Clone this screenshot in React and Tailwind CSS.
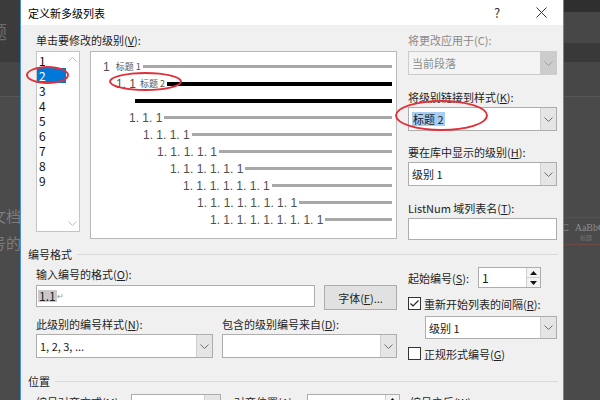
import React from "react";

const previewRows = [
  { pad: "pl-[12px]", num: "1", tag: "标题 1", tagGap: "ml-[6px]", line: "gray" },
  { pad: "pl-[25px]", num: "1. 1", tag: "标题 2", tagGap: "ml-[4px]", line: "black" },
  { pad: "pl-[42px]", num: "", tag: "", line: "black" },
  { pad: "pl-[38px]", num: "1. 1. 1", line: "gray" },
  { pad: "pl-[52px]", num: "1. 1. 1. 1", line: "gray" },
  { pad: "pl-[66px]", num: "1. 1. 1. 1. 1", line: "gray" },
  { pad: "pl-[79px]", num: "1. 1. 1. 1. 1. 1", line: "gray" },
  { pad: "pl-[92px]", num: "1. 1. 1. 1. 1. 1. 1", line: "gray" },
  { pad: "pl-[106px]", num: "1. 1. 1. 1. 1. 1. 1. 1", line: "gray" },
  { pad: "pl-[119px]", num: "1. 1. 1. 1. 1. 1. 1. 1. 1", line: "gray" },
];

function Chevron({ color = "#6d6d6d" }) {
  return (
    <svg width="9" height="5" viewBox="0 0 9 5">
      <path d="M0.5 0.5L4.5 4.5L8.5 0.5" fill="none" stroke={color} strokeWidth="1" />
    </svg>
  );
}

function Combo({ className, children, disabled }) {
  return (
    <div
      className={`flex shrink-0 border ${
        disabled
          ? "border-[#cccccc] bg-[#f4f4f4] text-[#8c8c8c]"
          : "border-[#adadad] bg-white text-[#1a1a1a]"
      } ${className}`}
    >
      <div className="flex flex-1 items-center pl-[3px]">{children}</div>
      <div
        className={`flex w-[16px] items-center justify-center border-l ${
          disabled ? "border-[#cccccc] bg-[#cccccc]" : "border-[#cfcfcf] bg-[#e5e5e5]"
        }`}
      >
        <Chevron color={disabled ? "#a0a0a0" : "#6d6d6d"} />
      </div>
    </div>
  );
}

function Spinner({ className, value }) {
  return (
    <div className={`flex shrink-0 border border-[#adadad] bg-white ${className}`}>
      <div className="flex flex-1 items-center pl-[3px]">{value}</div>
      <div className="flex w-[14px] flex-col border-l border-[#cfcfcf]">
        <div className="flex flex-1 items-center justify-center border-b border-[#cfcfcf] bg-[#f3f3f3]">
          <svg width="7" height="4" viewBox="0 0 7 4">
            <path d="M0 4L3.5 0L7 4Z" fill="#111" />
          </svg>
        </div>
        <div className="flex flex-1 items-center justify-center bg-[#f3f3f3]">
          <svg width="7" height="4" viewBox="0 0 7 4">
            <path d="M0 0L3.5 4L7 0Z" fill="#111" />
          </svg>
        </div>
      </div>
    </div>
  );
}

function Checkbox({ checked }) {
  return (
    <div className="flex h-[13px] w-[13px] shrink-0 items-center justify-center border border-[#333333] bg-white">
      {checked && (
        <svg width="11" height="11" viewBox="0 0 11 11">
          <path d="M1.5 5.5L4 8L9.5 2.5" fill="none" stroke="#222" strokeWidth="1.2" />
        </svg>
      )}
    </div>
  );
}

function GroupHeading({ children, className }) {
  return (
    <div className={`-ml-[8px] flex h-[14px] items-center ${className}`}>
      <span className="whitespace-nowrap">{children}</span>
      <div className="ml-[5px] h-px flex-1 bg-[#dadada]" />
    </div>
  );
}

export default function App() {
  return (
    <div className="relative flex h-[400px] w-[600px] overflow-hidden bg-[#4a4a4a] font-['Noto_Sans_CJK_SC',sans-serif]">
      {/* word window behind, left */}
      <div className="flex w-[20px] shrink-0 flex-col overflow-hidden bg-[#4b4b4b] text-[#7c7c7c]">
        <div className="flex h-[62px] shrink-0 items-center bg-[#3b3b3b]">
          <span className="-ml-[11px] whitespace-nowrap text-[18px] leading-[18px] text-[#6c6c6c]">题</span>
        </div>
        <div className="h-[35px] shrink-0 border-b border-[#565656] bg-[#464646]" />
        <div className="-ml-[9px] mt-[111px] whitespace-nowrap text-[15px] leading-[16px]">文档</div>
        <div className="-ml-[9px] mt-[11px] whitespace-nowrap text-[15px] leading-[16px]">号的</div>
      </div>

      {/* dialog */}
      <div className="h-full w-[544px] shrink-0 overflow-hidden border-x border-[#4a90d9] bg-[#f0f0f0] text-[11px] leading-[14px] text-[#1e1e1e]">
        <div className="flex h-[25px] items-center bg-white">
          <span className="pl-[7px] text-[11px] text-black">定义新多级列表</span>
          <div className="flex-1" />
          <div className="flex w-[44px] justify-center text-[13px] text-[#333]">?</div>
          <div className="flex w-[44px] justify-center">
            <svg width="11" height="11" viewBox="0 0 11 11">
              <path d="M0.5 0.5L10.5 10.5M10.5 0.5L0.5 10.5" stroke="#333" strokeWidth="1" />
            </svg>
          </div>
        </div>

        <div className="flex flex-col pl-[15px] pr-[5px] pt-[8px]">
          {/* top section */}
          <div className="flex">
            <div className="flex w-[361px] flex-col">
              <span className="h-[14px] whitespace-nowrap">
                单击要修改的级别(<u>V</u>):
              </span>
              <div className="mt-[4px] flex items-start">
                <div className="flex h-[181px] w-[44px] shrink-0 border border-[#c4c4c4] bg-white">
                  <div className="flex w-[29px] flex-col pt-[1px] text-[12px] leading-[15px]">
                    {["1", "2", "3", "4", "5", "6", "7", "8", "9"].map((n) => (
                      <div
                        key={n}
                        className={`h-[15px] shrink-0 pl-[2px] ${n === "2" ? "bg-[#0078d7] text-white" : "text-[#111]"}`}
                      >
                        {n}
                      </div>
                    ))}
                  </div>
                  <div className="flex flex-1 flex-col items-center justify-between py-[5px]">
                    <svg width="9" height="5" viewBox="0 0 9 5">
                      <path d="M0.5 4.5L4.5 0.5L8.5 4.5" fill="none" stroke="#bdbdbd" strokeWidth="1" />
                    </svg>
                    <Chevron color="#bdbdbd" />
                  </div>
                </div>
                <div className="ml-[10px] flex h-[188px] w-[307px] shrink-0 flex-col border border-[#b8b8b8] bg-white pr-[4px] pt-[6px] font-['Liberation_Sans',sans-serif] text-[12px] text-[#4f4f4f]">
                  {previewRows.map((r, i) => (
                    <div key={i} className={`flex h-[17px] shrink-0 items-center ${r.pad}`}>
                      {r.num && <span className="whitespace-nowrap">{r.num}</span>}
                      {r.tag && (
                        <span
                          className={`${r.tagGap} whitespace-nowrap font-['Noto_Sans_CJK_SC',sans-serif] text-[9px] text-[#555]`}
                        >
                          {r.tag}
                        </span>
                      )}
                      <div
                        className={`ml-[2px] flex-1 ${
                          r.line === "black" ? "h-[4px] bg-black" : "h-[3px] bg-[#a8a8a8]"
                        }`}
                      />
                    </div>
                  ))}
                </div>
              </div>
            </div>

            <div className="ml-[11px] flex w-[149px] flex-col">
              <span className="h-[14px] whitespace-nowrap text-[#8a8a8a]">将更改应用于(C):</span>
              <Combo disabled className="mt-[4px] h-[24px]">
                当前段落
              </Combo>
              <span className="mt-[15px] h-[14px] whitespace-nowrap">
                将级别链接到样式(<u>K</u>):
              </span>
              <Combo className="mt-[3px] h-[24px]">
                <span className="bg-[#a9cdf0] px-[1px]">标题 2</span>
              </Combo>
              <span className="mt-[14px] h-[14px] whitespace-nowrap">
                要在库中显示的级别(<u>H</u>):
              </span>
              <Combo className="mt-[3px] h-[24px]">级别 1</Combo>
              <span className="mt-[15px] h-[14px] whitespace-nowrap">
                ListNum 域列表名(<u>T</u>):
              </span>
              <div className="mt-[3px] h-[22px] shrink-0 border border-[#adadad] bg-white" />
            </div>
          </div>

          <GroupHeading className="mt-[7px]">编号格式</GroupHeading>

          {/* number format section */}
          <div className="mt-[6px] flex items-start">
            <div className="flex w-[361px] flex-col">
              <span className="h-[14px] whitespace-nowrap">
                输入编号的格式(<u>O</u>):
              </span>
              <div className="mt-[4px] flex items-start">
                <div className="flex h-[22px] w-[279px] items-center border border-[#adadad] bg-white pl-[1px]">
                  <span className="bg-[#c9c9c9] px-[1px] text-[12px] leading-[12px] text-[#222]">1.1</span>
                  <span className="text-[8px] text-[#999]">↵</span>
                </div>
                <div className="ml-[9px] flex h-[25px] w-[73px] items-center justify-center border border-[#adadad] bg-[#e1e1e1]">
                  字体(<u>F</u>)...
                </div>
              </div>
              <div className="mt-[7px] flex h-[14px]">
                <span className="w-[186px] whitespace-nowrap">
                  此级别的编号样式(<u>N</u>):
                </span>
                <span className="whitespace-nowrap">
                  包含的级别编号来自(<u>D</u>):
                </span>
              </div>
              <div className="mt-[3px] flex">
                <Combo className="h-[24px] w-[177px]">1, 2, 3, ...</Combo>
                <Combo className="ml-[9px] h-[24px] w-[175px]"> </Combo>
              </div>
            </div>

            <div className="ml-[11px] flex w-[149px] flex-col">
              <div className="flex h-[21px] items-center">
                <span className="w-[70px] whitespace-nowrap">
                  起始编号(<u>S</u>):
                </span>
                <Spinner className="h-[21px] w-[63px]" value={<span className="text-[12px]">1</span>} />
              </div>
              <div className="mt-[9px] flex h-[13px] items-center">
                <Checkbox checked />
                <span className="ml-[3px] whitespace-nowrap">
                  重新开始列表的间隔(<u>R</u>):
                </span>
              </div>
              <Combo className="ml-[17px] mt-[6px] h-[23px] w-[132px]">级别 1</Combo>
              <div className="mt-[8px] flex h-[13px] items-center">
                <Checkbox />
                <span className="ml-[3px] whitespace-nowrap">
                  正规形式编号(<u>G</u>)
                </span>
              </div>
            </div>
          </div>

          <GroupHeading className="mt-[14px]">位置</GroupHeading>

          {/* position section, cut off */}
          <div className="mt-[6px] flex items-start">
            <span className="mt-[1px] w-[95px] whitespace-nowrap">
              编号对齐方式(<u>M</u>):
            </span>
            <Combo className="h-[24px] w-[90px]"> </Combo>
            <span className="ml-[13px] mt-[1px] w-[73px] whitespace-nowrap">
              对齐位置(<u>A</u>):
            </span>
            <Spinner className="h-[24px] w-[93px]" value={<span className="text-[#888]">0.75 厘米</span>} />
            <span className="ml-[10px] mt-[1px] whitespace-nowrap">
              编号之后(<u>W</u>):
            </span>
          </div>
        </div>
      </div>

      {/* word window behind, right */}
      <div className="flex flex-1 flex-col overflow-hidden bg-[#4a4a4a] text-[#8c8c8c]">
        <div className="h-[12px] shrink-0 bg-[#2f2f2f]" />
        <div className="h-[31px] shrink-0 bg-[#474747]" />
        <div className="h-[19px] shrink-0 bg-[#393939]" />
        <div className="h-[35px] shrink-0 border-b border-[#575757] bg-[#474747]" />
        <div className="mt-[120px] h-px shrink-0 bg-[#6e4a44]" />
        <div className="mt-[3px] flex h-[13px] items-center whitespace-nowrap font-['Liberation_Serif',serif] text-[10px]">
          <span className="-ml-[2px]">C</span>
          <span className="ml-[6px]">AaBbC</span>
        </div>
        <div className="ml-[16px] h-[8px] text-[6px] leading-[8px] text-[#777]">标题</div>
        <div className="mt-[2px] h-px shrink-0 bg-[#6e4a44]" />
      </div>

      {/* red annotation marks */}
      <div className="pointer-events-none absolute left-[26px] top-[66px] h-[18px] w-[43px] rounded-[50%] border-2 border-[#e0303a]" />
      <div className="pointer-events-none absolute left-[109px] top-[72px] h-[19px] w-[73px] rounded-[50%] border-2 border-[#e0303a]" />
      <div className="pointer-events-none absolute left-[395px] top-[100px] h-[31px] w-[93px] rounded-[50%] border-2 border-[#e0303a]" />
    </div>
  );
}
